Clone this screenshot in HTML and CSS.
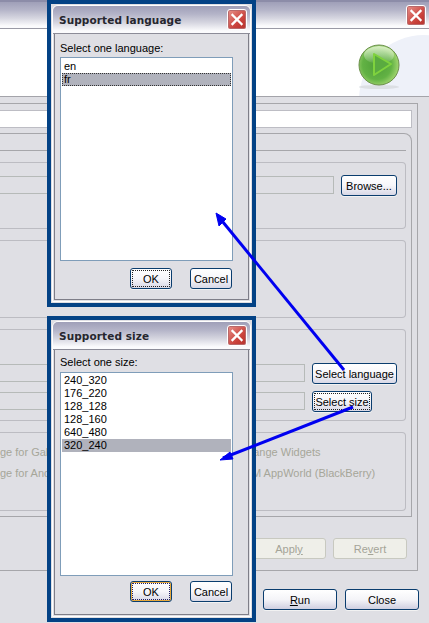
FILE: index.html
```html
<!DOCTYPE html>
<html lang="en">
<head>
<meta charset="utf-8">
<title>Run configuration</title>
<link rel="stylesheet" href="styles.css">
</head>
<body>
<div class="desktop">
  <div class="bgwin">
    <div class="titlebar main-title">
      <span class="close"><svg viewBox="0 0 20 20" class="x"><path d="M5 5L15 15M15 5L5 15"/></svg></span>
    </div>
    <div class="banner">
      <div class="swirl"></div>
      <svg class="play" viewBox="0 0 44 50" width="44" height="50">
        <defs>
          <radialGradient id="ball" cx="0.45" cy="0.5" r="0.6">
            <stop offset="0" stop-color="#4f9f38"/>
            <stop offset="0.6" stop-color="#62b244"/>
            <stop offset="1" stop-color="#b4e07c"/>
          </radialGradient>
          <linearGradient id="shine" x1="0" y1="0" x2="0" y2="1">
            <stop offset="0" stop-color="#e6f6d4" stop-opacity="0.85"/>
            <stop offset="1" stop-color="#ffffff" stop-opacity="0"/>
          </linearGradient>
        </defs>
        <ellipse cx="22" cy="44" rx="20" ry="2" fill="#dcdfe4"/>
        <circle cx="22" cy="22" r="20" fill="url(#ball)" stroke="#6c8f4c" stroke-width="1"/>
        <ellipse cx="22" cy="12" rx="15" ry="9" fill="url(#shine)"/>
        <path d="M17 11L34 21L17 32Z" fill="#5aab40" stroke="#7fd23e" stroke-width="2" stroke-linejoin="round"/>
      </svg>
    </div>
    <div class="outer">
      <div class="name-input"></div>
      <div class="folder">
        <div class="tabhead"></div>
        <div class="group g1">
          <div class="field f-browse"></div>
          <button class="btn browse">Browse...</button>
        </div>
        <div class="group g2"></div>
        <div class="group g3">
          <div class="row r-lang"><div class="field f-sel"></div><button class="btn sel-lang">Select language</button></div>
          <div class="row r-size"><div class="field f-sel"></div><button class="btn sel-size focus-dots">Select size</button></div>
        </div>
        <div class="group g4">
          <div class="optrow"><span class="opt-l">ge for Gallery</span><span class="opt-r">Orange Widgets</span></div>
          <div class="optrow"><span class="opt-l">ge for Android</span><span class="opt-r">RIM AppWorld (BlackBerry)</span></div>
        </div>
      </div>
      <div class="applyrow">
        <button class="btn disabled apply">Appl<u>y</u></button>
        <button class="btn disabled revert">Re<u>v</u>ert</button>
      </div>
    </div>
    <div class="footer">
      <button class="btn foot"><u>R</u>un</button>
      <button class="btn foot">Close</button>
    </div>
  </div>

  <section class="dialog d-lang">
    <div class="frame">
      <div class="titlebar dlg-title">
        <span class="dlg-name">Supported language</span>
        <span class="close"><svg viewBox="0 0 20 20" class="x"><path d="M5 5L15 15M15 5L5 15"/></svg></span>
      </div>
      <div class="dlg-body">
        <div class="prompt">Select one language:</div>
        <ul class="list list-lang">
          <li>en</li>
          <li class="sel dotted">fr</li>
        </ul>
        <div class="dlg-btns">
          <button class="btn dlg focus-dots">OK</button>
          <button class="btn dlg">Cancel</button>
        </div>
      </div>
    </div>
  </section>

  <section class="dialog d-size">
    <div class="frame">
      <div class="titlebar dlg-title">
        <span class="dlg-name">Supported size</span>
        <span class="close"><svg viewBox="0 0 20 20" class="x"><path d="M5 5L15 15M15 5L5 15"/></svg></span>
      </div>
      <div class="dlg-body body-size">
        <div class="prompt prompt-size">Select one size:</div>
        <ul class="list list-size">
          <li>240_320</li>
          <li>176_220</li>
          <li>128_128</li>
          <li>128_160</li>
          <li>640_480</li>
          <li class="sel">320_240</li>
        </ul>
        <div class="dlg-btns btns-size">
          <button class="btn dlg focus-dots orange">OK</button>
          <button class="btn dlg">Cancel</button>
        </div>
      </div>
    </div>
  </section>

  <svg class="arrows" viewBox="0 0 429 623" width="429" height="623">
    <path d="M344 370L218 216" class="ln"/>
    <path d="M216 213L226 219L219 226Z" class="hd"/>
    <path d="M353 407L223 458" class="ln"/>
    <path d="M220 460L230 452L233 459Z" class="hd"/>
  </svg>
</div>
</body>
</html>
```
FILE: styles.css
```css
* { box-sizing: border-box; }
html, body { margin: 0; padding: 0; }
body { font-family: "Liberation Sans", Arial, sans-serif; font-size: 11px; color: #000; }
.desktop { position: relative; width: 429px; height: 623px; overflow: hidden; background: #dfdfe4; }
.bgwin { width: 429px; height: 623px; }

.titlebar { display: flex; align-items: center; justify-content: space-between; background: linear-gradient(#9f9fb8 0, #b4b4c8 30%, #d6d6e0 62%, #fbfbfd 92%); }
.main-title { height: 29px; padding: 0 3px 0 0; justify-content: flex-end; border-top: 2px solid #8c8ca8; border-bottom: 1px solid #9a9aa6; }
.close { display: block; width: 20px; height: 21px; border: 1px solid #fff; border-radius: 3px; background: linear-gradient(135deg, #e8928a, #c9403a 65%, #b5332e); box-shadow: 0 0 0 1px #b8686a inset; }
.x { display: block; width: 18px; height: 19px; }
.x path { stroke: #fff; stroke-width: 2.6; fill: none; stroke-linecap: square; }

.banner { position: relative; height: 68px; background: #fff; border-bottom: 1px solid #a4a4aa; overflow: hidden; }
.swirl { position: absolute; right: -60px; top: 6px; width: 130px; height: 130px; border-radius: 50%; background: #eef1f9; }
.play { position: absolute; left: 357px; top: 14px; }

.outer { margin: 6px 11px 0 0; height: 468px; border: 1px solid #a6a6aa; border-left: 0; padding: 6px 5px 0 0; }
.name-input { height: 18px; background: #fff; border: 1px solid #bdbdc4; border-left: 0; }
.folder { margin-top: 5px; height: 384px; border: 1px solid #a6a6aa; border-left: 0; border-top-right-radius: 8px; padding: 0 5px 0 0; }
.tabhead { height: 17px; border-bottom: 1px solid #a6a6aa; }
.group { margin-top: 11px; border: 1px solid #bcbcc2; border-left: 0; border-radius: 0 4px 4px 0; }
.g1 { height: 67px; display: flex; align-items: flex-start; padding: 12px 8px 0 0; }
.g2 { height: 78px; margin-top: 11px; }
.g3 { height: 92px; padding: 33px 8px 0 0; }
.g4 { height: 79px; padding-top: 12px; }
.field { flex: none; height: 18px; border: 1px solid #b6bab8; border-left: 0; background: #dfdfe4; }
.f-browse { width: 334px; margin-top: 1px; margin-right: 7px; }
.row { display: flex; align-items: flex-start; height: 28px; }
.f-sel { width: 305px; margin-top: 1px; margin-right: 7px; }

.btn { flex: none; font: inherit; font-size: 11px; color: #000; padding: 0; height: 20px; border: 1px solid #0a3d6e; border-radius: 3px; background: linear-gradient(#fff 0, #f6f6fa 50%, #d8d8e6 100%); box-shadow: 0 1px 0 #f2f2f2; display: block; }
.btn u { text-decoration: underline; }
.browse { width: 56px; height: 21px; }
.sel-lang { width: 85px; height: 21px; }
.sel-size { width: 60px; height: 21px; }
.focus-dots { outline: 1px dotted #222; outline-offset: -3px; }
.orange { box-shadow: inset 0 0 0 1px #e6a93c; outline-color: #222066; }

.optrow { display: flex; height: 21px; color: #a6a699; font-size: 11px; line-height: 14px; white-space: nowrap; }
.opt-l { display: block; width: 241px; flex: none; }
.opt-r { display: block; }

.applyrow { display: flex; justify-content: flex-end; gap: 7px; margin-top: 21px; padding-right: 5px; }
.disabled { width: 74px; height: 21px; color: #a4a498; border: 1px solid #c8c9c0; background: #efefe9; box-shadow: none; }
.apply { width: 74px; }
.footer { display: flex; justify-content: flex-end; gap: 8px; margin-top: 18px; padding-right: 10px; }
.foot { width: 74px; height: 21px; background: linear-gradient(#fff 0, #f4f4f8 50%, #cfcfe0 100%); }

.dialog { position: absolute; left: 47px; width: 209px; background: #dfdfe4; border: 4px solid #034285; padding: 1px; }
.d-lang { top: 0; height: 307px; }
.d-size { top: 316px; height: 306px; }
.frame { height: 100%; border: 1px solid #fff; border-radius: 6px 6px 0 0; display: flex; flex-direction: column; overflow: hidden; }
.dlg-title { flex: none; height: 28px; padding: 0 3px 0 6px; border-bottom: 1px solid #8c8c98; }
.dlg-name { font-family: "DejaVu Sans", sans-serif; font-weight: bold; font-size: 10.5px; color: #26262e; letter-spacing: 0.1px; }
.dlg-body { flex: 1; margin: 0 1px 1px; border: 1px solid #7e7e88; border-top: 0; padding: 7px 15px 0 5px; }
.body-size { padding-top: 5px; }
.prompt { height: 16px; line-height: 14px; font-size: 11px; }
.prompt-size { height: 17px; }
.list { list-style: none; margin: 0; padding: 2px 1px; height: 204px; background: #fff; border: 1px solid #7f9db9; font-size: 11px; }
.list li { height: 13px; line-height: 13px; padding-left: 2px; }
.list-size { padding-top: 1px; }
.sel { background: #b0b2bc; }
.dotted { outline: 1px dotted #333; outline-offset: -1px; }
.dlg-btns { display: flex; justify-content: flex-end; gap: 18px; margin-top: 7px; padding-right: 1px; }
.btns-size { margin-top: 5px; }
.dlg { width: 42px; height: 21px; }

.arrows { position: absolute; left: 0; top: 0; pointer-events: none; }
.ln { stroke: #0000f0; stroke-width: 3; fill: none; }
.hd { fill: #0000f0; stroke: #0000f0; stroke-width: 1; }
```
